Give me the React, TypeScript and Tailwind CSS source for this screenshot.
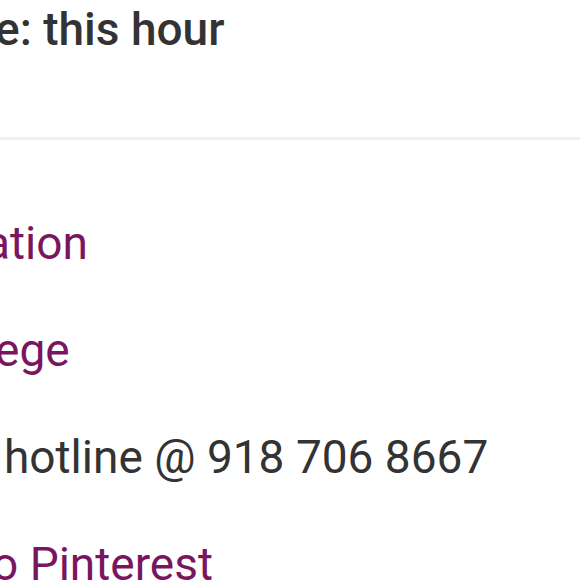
export default function App() {
  const font = { fontFamily: "Roboto, 'Liberation Sans', sans-serif" };
  return (
    <div className="w-[580px] h-[580px] overflow-hidden bg-white" style={font}>
      <div className="pt-[2px] h-[137px]">
        <div className="-ml-[5px] whitespace-nowrap text-[46px] leading-[54px] font-medium text-[#333333]">
          e: this hour
        </div>
      </div>
      <div className="h-[3px] bg-[#f0f0ee]" />
      <div className="flex flex-col pt-[76px] gap-[53px] text-[46px] leading-[54px] whitespace-nowrap">
        <a className="-ml-[15px] text-[#7a1660]">ation</a>
        <a className="-ml-[5px] text-[#7a1660]">ege</a>
        <span className="ml-[4px] text-[#333333]">hotline @ 918 706 8667</span>
        <a className="-ml-[8px] text-[#7a1660]">o Pinterest</a>
      </div>
    </div>
  );
}
